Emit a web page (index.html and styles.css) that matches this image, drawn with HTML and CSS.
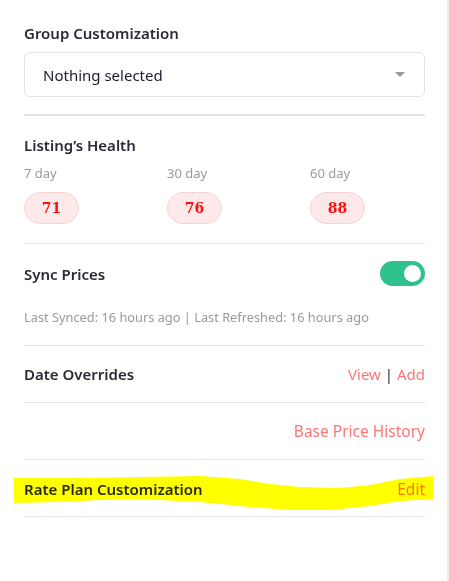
FILE: index.html
```html
<!DOCTYPE html>
<html lang="en">
<head>
  <meta charset="UTF-8" />
  <meta name="viewport" content="width=device-width, initial-scale=1.0" />
  <title>Listing Settings</title>
  <link rel="stylesheet" href="styles.css">
</head>
<body>
  <div class="panel">
    <!-- Group customization -->
    <div class="section section-group">
      <h3 class="heading">Group Customization</h3>
      <div class="select-box">
        <span>Nothing selected</span>
        <span class="caret"></span>
      </div>
    </div>

    <!-- Health -->
    <div class="section section-health">
      <h3 class="heading">Listing’s Health</h3>
      <div class="health-grid">
        <div class="health-col">
          <span class="muted">7 day</span>
          <span class="pill">71</span>
        </div>
        <div class="health-col">
          <span class="muted">30 day</span>
          <span class="pill">76</span>
        </div>
        <div class="health-col">
          <span class="muted">60 day</span>
          <span class="pill">88</span>
        </div>
      </div>
    </div>

    <!-- Sync -->
    <div class="section section-sync">
      <div class="row">
        <h3 class="heading">Sync Prices</h3>
        <span class="toggle on"><span class="knob"></span></span>
      </div>
      <p class="muted small">Last Synced: 16 hours ago | Last Refreshed: 16 hours ago</p>
    </div>

    <div class="section">
      <div class="row">
        <h3 class="heading">Date Overrides</h3>
        <span class="links"><a href="#">View</a> | <a href="#">Add</a></span>
      </div>
    </div>

    <div class="section">
      <div class="row row-end">
        <a href="#" class="history">Base Price History</a>
      </div>
    </div>

    <div class="section section-rate">
      <div class="row">
        <h3 class="heading">Rate Plan Customization</h3>
        <a href="#" class="edit">Edit</a>
      </div>
      <!-- marker annotation -->
      <svg class="marker" width="449" height="60" viewBox="0 468 449 60">
        <path d="M14 478 L70 478 L140 477 L200 476 L240 479 L270 484 L300 487 L340 488 L370 485 L400 479 L433 476 L433 499 L400 501 L370 506 L330 510 L290 510 L250 507 L200 502 L140 499 L100 500 L60 502 L14 503 Z" fill="#ffff00"/>
      </svg>
    </div>
  </div>
</body>
</html>
```

FILE: styles.css
```css
* {
  box-sizing: border-box;
}

body {
  margin: 0;
  font-family: "Noto Sans", "Liberation Sans", sans-serif;
  background: #fff;
  color: #2b2b36;
}

.panel {
  position: relative;
  width: 449px;
  min-height: 581px;
  padding: 0 22px 0 24px;
  border-right: 2px solid #ececec;
}

.section {
  padding: 18px 0;
  border-bottom: 1px solid #e4e4e4;
}

.section-group {
  padding: 23px 0 17px;
  border-bottom-width: 2px;
}

.section-health {
  padding: 19px 0 19px;
}

.section-sync {
  padding: 17px 0 19px;
}

.section-rate {
  padding: 19px 0 17px;
}

.heading {
  margin: 0;
  font-size: 15px;
  line-height: 20px;
  font-weight: 600;
  color: #2b2b36;
}

.select-box {
  margin-top: 9px;
  height: 45px;
  border: 1px solid #e3e3e3;
  border-radius: 6px;
  padding: 0 19px 0 18px;
  display: flex;
  align-items: center;
  justify-content: space-between;
  font-size: 15px;
  color: #1c1a2e;
}

.caret {
  width: 0;
  height: 0;
  border-left: 5px solid transparent;
  border-right: 5px solid transparent;
  border-top: 5px solid #999;
}

.health-grid {
  margin-top: 9px;
  display: grid;
  grid-template-columns: repeat(3, 143px);
}

.health-col {
  display: flex;
  flex-direction: column;
  align-items: flex-start;
  gap: 10px;
}

.muted {
  color: #9a9a9a;
  font-size: 13px;
  line-height: 18px;
}

.pill {
  width: 55px;
  height: 32px;
  border-radius: 16px;
  background: #fde9e9;
  border: 1px solid #f9d3d3;
  display: flex;
  align-items: center;
  justify-content: center;
  font-family: "DejaVu Serif", "Liberation Serif", serif;
  font-weight: bold;
  font-size: 14px;
  color: #ff1010;
}

.row {
  display: flex;
  align-items: center;
  justify-content: space-between;
  min-height: 20px;
}

.row-end {
  justify-content: flex-end;
}

.small {
  margin: 22px 0 0;
  font-size: 12.8px;
}

.toggle {
  width: 45px;
  height: 25px;
  border-radius: 13px;
  background: #2fc18b;
  display: flex;
  align-items: center;
  justify-content: flex-end;
  padding-right: 4px;
}

.knob {
  width: 17px;
  height: 17px;
  border-radius: 50%;
  background: #fff;
}

a {
  color: #fa7777;
  text-decoration: none;
  font-size: 15px;
  line-height: 20px;
}

.history {
  font-size: 15.5px;
}

.edit {
  font-size: 15.5px;
}

.links {
  font-size: 15px;
  color: #2b2b36;
}

.marker {
  position: absolute;
  left: 0;
  top: 468px;
  mix-blend-mode: multiply;
  pointer-events: none;
}
```
